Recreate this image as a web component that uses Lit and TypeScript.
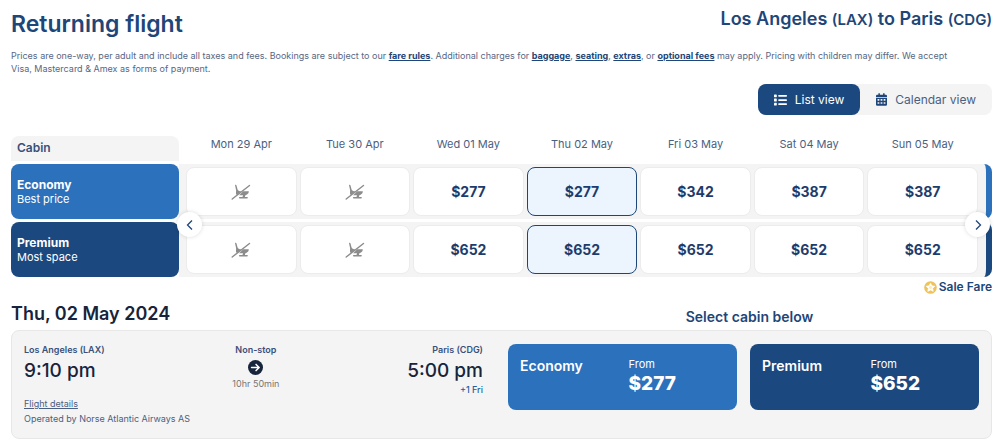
import { LitElement, html, css, svg } from "lit";
import { customElement, state } from "lit/decorators.js";

interface Fare {
  date: string;
  economy: number | null;
  premium: number | null;
}

const FARES: Fare[] = [
  { date: "Mon 29 Apr", economy: null, premium: null },
  { date: "Tue 30 Apr", economy: null, premium: null },
  { date: "Wed 01 May", economy: 277, premium: 652 },
  { date: "Thu 02 May", economy: 277, premium: 652 },
  { date: "Fri 03 May", economy: 342, premium: 652 },
  { date: "Sat 04 May", economy: 387, premium: 652 },
  { date: "Sun 05 May", economy: 387, premium: 652 },
];

const listIcon = svg`<svg class="icon" viewBox="0 0 14 12" width="13" height="12" fill="currentColor" aria-hidden="true">
  <rect x="0" y="0" width="3" height="3" rx=".5"/><rect x="0" y="4.5" width="3" height="3" rx=".5"/><rect x="0" y="9" width="3" height="3" rx=".5"/>
  <rect x="4.5" y=".6" width="9.5" height="1.9" rx=".8"/><rect x="4.5" y="5.1" width="9.5" height="1.9" rx=".8"/><rect x="4.5" y="9.6" width="9.5" height="1.9" rx=".8"/></svg>`;

const calendarIcon = svg`<svg class="icon" viewBox="0 0 448 512" width="11" height="13" fill="currentColor" aria-hidden="true">
  <path fill-rule="evenodd" d="M96 16a16 16 0 0 1 16-16h32a16 16 0 0 1 16 16v48h128V16a16 16 0 0 1 16-16h32a16 16 0 0 1 16 16v48h48a48 48 0 0 1 48 48v48H0v-48a48 48 0 0 1 48-48h48zM0 192h448v272a48 48 0 0 1-48 48H48a48 48 0 0 1-48-48zM64 240v64h72v-64zM188 240v64h72v-64zM312 240v64h72v-64zM64 368v64h72v-64zM188 368v64h72v-64zM312 368v64h72v-64z"/></svg>`;

const noSeatIcon = svg`<svg viewBox="0 0 20 18" width="20" height="18" role="img" aria-label="Unavailable">
  <g fill="#8c8c8c">
    <path d="M4 2c.5-.5 1.300-.3 1.500.4l1 3.800c.5 1.500 1.700 2 4 2L6.200 12c-1-.3-1.300-1-1.200-2l.1-2.700z"/>
    <path d="M12.200 8.200h5c.6 0 .8.400.6.900-.5 1.700-1.600 2.900-3.400 3.100l-.5 1.700h2.100c.6 0 .9.300.9.800s-.3.800-.9.800H8.800c-.6 0-.9-.3-.9-.8s.3-.8.900-.8h2.700l.5-1.600H8.100z"/>
  </g>
  <path fill="none" stroke="#8c8c8c" stroke-width="1.400" stroke-linecap="round" d="M1.200 16 18.500 2.500"/></svg>`;

const chevron = (d: string) => svg`<svg viewBox="0 0 12 12" width="12" height="12" fill="none" stroke="#1e4678" stroke-width="1.300" aria-hidden="true"><path d=${d}/></svg>`;

const saleIcon = svg`<svg viewBox="0 0 14 14" width="13" height="13" aria-hidden="true">
  <circle cx="7" cy="7" r="6.800" fill="#efc35c"/>
  <path fill="#fff" stroke="#fff" stroke-width=".8" stroke-linejoin="round" d="m7 2.300 1.400 2.900 3.200.5-2.300 2.200.6 3.200L7 9.600l-2.900 1.500.6-3.200-2.300-2.200 3.200-.5z"/>
  <circle cx="7" cy="7" r="1.500" fill="#fae9bd"/></svg>`;

const arrowIcon = svg`<svg viewBox="0 0 16 16" width="15" height="15" aria-hidden="true">
  <circle cx="8" cy="8" r="8" fill="#17243c"/>
  <path fill="none" stroke="#fff" stroke-width="1.600" stroke-linecap="round" stroke-linejoin="round" d="M3.800 8h8M8.600 4.700 11.900 8l-3.300 3.300"/></svg>`;

@customElement("app-root")
export class AppRoot extends LitElement {
  @state() private selected = 3;
  @state() private view = "list";

  static styles = css`
    :host {
      display: block;
      padding: 8px 8px 6px 11px;
      box-sizing: border-box;
      background: #fff;
      color: #1e4678;
      font-family: Inter, "Liberation Sans", sans-serif;
      font-size: 12px;
      line-height: 16px;
    }
    * { box-sizing: border-box; }
    h1, h2, h3, p { margin: 0; }
    button { font: inherit; color: inherit; border: 0; padding: 0; margin: 0; background: none; cursor: pointer; }
    a { color: inherit; }
    svg { display: block; flex: none; }

    .head { display: flex; justify-content: space-between; align-items: flex-start; }
    .title { font-size: 23px; line-height: 32px; font-weight: 600; }
    .route { font-size: 18px; line-height: 22px; font-weight: 600; }
    .code { font-size: 15px; }
    .notice { margin-top: 9px; padding-right: 24px; font-size: 9px; line-height: 13px; color: #576784; }
    .notice a { font-weight: 700; color: #1e4678; }

    .views { display: flex; width: fit-content; margin: 9px 0 0 auto; border-radius: 8px; background: #f4f4f4; }
    .view { display: flex; align-items: center; gap: 8px; height: 31px; padding: 0 16px; border-radius: 8px; font-size: 12px; color: #4b5f82; }
    .view .icon { color: #1e4678; }
    .view.on, .view.on .icon { background: #1b487e; color: #fff; }

    .fares { display: grid; grid-template-columns: 168px minmax(0, 1fr); margin-top: 15px; position: relative; }
    .labels { display: grid; grid-template-rows: 31px 55px 55px; row-gap: 3px; }
    .cabin-head { margin-top: 6px; padding: 4px 6px; border-radius: 8px 8px 0 0; background: #f4f4f4; font-weight: 600; color: #3a5079; }
    .cabin { padding: 14px 6px 0; border-radius: 8px; color: #fff; font-size: 11px; line-height: 14px; }
    .cabin b { display: block; font-size: 12px; font-weight: 700; }
    .economy { background: #2c71bb; }
    .premium { background: #1b487e; }

    .week { display: grid; grid-template-rows: 31px 55px 55px; row-gap: 3px; }
    .dates, .row { display: grid; grid-template-columns: repeat(7, minmax(0, 1fr)); column-gap: 3px; padding: 0 14px 0 7px; }
    .dates { font-size: 11px; line-height: 28px; text-align: center; color: #4b5f82; }
    .row { padding-top: 3px; padding-bottom: 3px; position: relative; background: #f4f4f4; border-radius: 0 8px 8px 0; }
    .row::after { content: ""; position: absolute; right: 0; top: 0; bottom: 0; width: 12px; border-radius: 0 8px 8px 0; border-right: 6px solid #2c71bb; }
    .row.second::after { border-right-color: #1b487e; }
    .fare { display: flex; align-items: center; justify-content: center; border: 1px solid #ececec; border-radius: 8px; background: #fff; font-size: 14px; font-weight: 700; color: #1e3c6b; }
    .fare.on { background: #ecf5fe; border-color: #1e4678; }
    .nav { position: absolute; top: 82px; display: flex; align-items: center; justify-content: center; width: 25px; height: 25px; border-radius: 50%; background: #fff; box-shadow: 0 0 4px rgba(0, 0, 0, 0.14); }
    .prev { left: 166px; }
    .next { right: 2px; }

    .sale { display: flex; justify-content: flex-end; align-items: center; gap: 2px; margin-top: 2px; font-size: 12px; font-weight: 600; }
    .subhead { display: grid; grid-template-columns: minmax(0, 1fr) 485px; align-items: end; margin-top: 7px; }
    .day { font-size: 18px; line-height: 24px; font-weight: 600; color: #17243c; }
    .select { font-size: 14px; line-height: 18px; font-weight: 600; text-align: center; }

    .flight { display: grid; grid-template-columns: minmax(0, 1fr) minmax(0, 471px); column-gap: 25px; margin-top: 4px; padding: 12px; min-height: 109px; border: 1px solid #e7e7e7; border-radius: 8px; background: #f4f4f4; }
    .times { display: flex; justify-content: space-between; }
    .place { font-size: 9px; line-height: 14px; font-weight: 600; color: #3a5079; }
    .time { font-size: 19px; line-height: 28px; font-weight: 500; color: #17243c; }
    .mid { display: flex; flex-direction: column; align-items: center; }
    .mid svg { margin: 3px 0 2px; }
    .length { font-size: 9px; line-height: 14px; color: #767676; }
    .arrive { text-align: right; }
    .plus { font-size: 9px; line-height: 10px; font-weight: 500; color: #2a5ca0; }
    .info { margin-top: 1px; font-size: 9px; line-height: 15px; color: #4b5f82; }
    .offers { display: grid; grid-template-columns: 1fr 1fr; column-gap: 13px; align-items: start; padding-top: 1px; }
    .offer { display: grid; grid-template-columns: 1fr 1fr; column-gap: 12px; align-items: start; height: 66px; padding: 12px; border-radius: 8px; color: #fff; text-align: left; font-size: 14px; font-weight: 600; line-height: 20px; }
    .from { display: block; font-size: 11px; line-height: 16px; font-weight: 400; }
    .price { display: block; font-size: 19px; line-height: 24px; font-weight: 800; }
  `;

  private renderRow(cabin: "economy" | "premium") {
    return html`<div class="row ${cabin === "premium" ? "second" : ""}">
      ${FARES.map((f, i) => html`<button
        class="fare ${i === this.selected ? "on" : ""}"
        ?disabled=${f[cabin] === null}
        @click=${() => (this.selected = i)}
      >${f[cabin] === null ? noSeatIcon : `$${f[cabin]}`}</button>`)}
    </div>`;
  }

  render() {
    return html`
      <header class="head">
        <h1 class="title">Returning flight</h1>
        <h2 class="route">Los Angeles <span class="code">(LAX)</span> to Paris <span class="code">(CDG)</span></h2>
      </header>
      <p class="notice">Prices are one-way, per adult and include all taxes and fees. Bookings are subject to our <a href="#rules">fare rules</a>. Additional charges for <a href="#baggage">baggage</a>, <a href="#seating">seating</a>, <a href="#extras">extras</a>, or <a href="#fees">optional fees</a> may apply. Pricing with children may differ. We accept Visa, Mastercard &amp; Amex as forms of payment.</p>
      <div class="views">
        <button class="view ${this.view === "list" ? "on" : ""}" @click=${() => (this.view = "list")}>${listIcon}List view</button>
        <button class="view ${this.view === "calendar" ? "on" : ""}" @click=${() => (this.view = "calendar")}>${calendarIcon}Calendar view</button>
      </div>
      <section class="fares">
        <div class="labels">
          <div class="cabin-head">Cabin</div>
          <div class="cabin economy"><b>Economy</b>Best price</div>
          <div class="cabin premium"><b>Premium</b>Most space</div>
        </div>
        <div class="week">
          <div class="dates">${FARES.map((f) => html`<span>${f.date}</span>`)}</div>
          ${this.renderRow("economy")}
          ${this.renderRow("premium")}
        </div>
        <button class="nav prev" aria-label="Previous days">${chevron("M8 1.500 3.500 6 8 10.500")}</button>
        <button class="nav next" aria-label="Next days">${chevron("M4 1.500 8.500 6 4 10.500")}</button>
      </section>
      <div class="sale">${saleIcon}Sale Fare</div>
      <div class="subhead">
        <h2 class="day">Thu, 02 May 2024</h2>
        <h3 class="select">Select cabin below</h3>
      </div>
      <section class="flight">
        <div>
          <div class="times">
            <div><div class="place">Los Angeles (LAX)</div><div class="time">9:10 pm</div></div>
            <div class="mid"><div class="place">Non-stop</div>${arrowIcon}<div class="length">10hr 50min</div></div>
            <div class="arrive"><div class="place">Paris (CDG)</div><div class="time">5:00 pm</div><div class="plus">+1 Fri</div></div>
          </div>
          <div class="info"><a href="#details">Flight details</a><br />Operated by Norse Atlantic Airways AS</div>
        </div>
        <div class="offers">
          <button class="offer economy"><span>Economy</span><span><span class="from">From</span><span class="price">$277</span></span></button>
          <button class="offer premium"><span>Premium</span><span><span class="from">From</span><span class="price">$652</span></span></button>
        </div>
      </section>
    `;
  }
}
